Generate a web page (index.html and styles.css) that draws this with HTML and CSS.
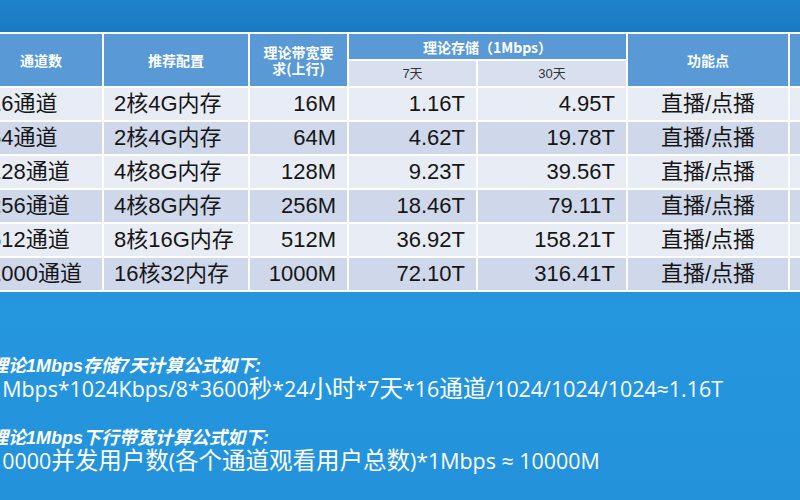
FILE: index.html
```html
<!DOCTYPE html>
<html lang="zh-CN">
<head>
<meta charset="utf-8">
<title>通道配置</title>
<link rel="stylesheet" href="styles.css">
</head>
<body>
<div class="slide">
  <table class="spec">
    <colgroup>
      <col class="c1"><col class="c2"><col class="c3"><col class="c4"><col class="c5"><col class="c6"><col class="c7">
    </colgroup>
    <thead>
      <tr>
        <th rowspan="2">通道数</th>
        <th rowspan="2">推荐配置</th>
        <th rowspan="2">理论带宽要<br>求(上行)</th>
        <th colspan="2" class="group">理论存储（1Mbps）</th>
        <th rowspan="2">功能点</th>
        <th rowspan="2"></th>
      </tr>
      <tr>
        <th class="sub">7天</th>
        <th class="sub">30天</th>
      </tr>
    </thead>
    <tbody>
      <tr class="odd"><td>16通道</td><td>2核4G内存</td><td class="num">16M</td><td class="num">1.16T</td><td class="num">4.95T</td><td class="mid">直播/点播</td><td></td></tr>
      <tr class="even"><td>64通道</td><td>2核4G内存</td><td class="num">64M</td><td class="num">4.62T</td><td class="num">19.78T</td><td class="mid">直播/点播</td><td></td></tr>
      <tr class="odd"><td>128通道</td><td>4核8G内存</td><td class="num">128M</td><td class="num">9.23T</td><td class="num">39.56T</td><td class="mid">直播/点播</td><td></td></tr>
      <tr class="even"><td>256通道</td><td>4核8G内存</td><td class="num">256M</td><td class="num">18.46T</td><td class="num">79.11T</td><td class="mid">直播/点播</td><td></td></tr>
      <tr class="odd"><td>512通道</td><td>8核16G内存</td><td class="num">512M</td><td class="num">36.92T</td><td class="num">158.21T</td><td class="mid">直播/点播</td><td></td></tr>
      <tr class="even"><td>1000通道</td><td>16核32内存</td><td class="num">1000M</td><td class="num">72.10T</td><td class="num">316.41T</td><td class="mid">直播/点播</td><td></td></tr>
    </tbody>
  </table>
  <div class="notes">
    <p class="title">理论1Mbps存储7天计算公式如下:</p>
    <p class="formula">1Mbps*1024Kbps/8*3600<span class="zh">秒</span>*24<span class="zh">小时</span>*7<span class="zh">天</span>*16<span class="zh">通道</span>/1024/1024/1024≈1.16T</p>
    <p class="title second">理论1Mbps下行带宽计算公式如下:</p>
    <p class="formula">10000<span class="zh">并发用户数</span>(<span class="zh">各个通道观看用户总数</span>)*1Mbps ≈ 10000M</p>
  </div>
</div>
</body>
</html>
```
FILE: styles.css
```css
* { box-sizing: border-box; }
html, body { margin: 0; padding: 0; }
body { width: 800px; height: 500px; overflow: hidden; }
.slide {
  width: 800px;
  height: 500px;
  overflow: hidden;
  padding-top: 32px;
  background: linear-gradient(180deg, #1e84cb 0px, #1a7bc3 30px, #1e88d0 120px, #2597de 310px, #2392da 500px);
}
.spec {
  margin-left: -22px;
  table-layout: fixed;
  width: 924px;
  border-collapse: separate;
  border-spacing: 2px;
  background: #ffffff;
  font-family: "Liberation Sans", "Noto Sans CJK SC", sans-serif;
}
.c1 { width: 122px; }
.c2 { width: 144px; }
.c3 { width: 97px; }
.c4 { width: 127px; }
.c5 { width: 148px; }
.c6 { width: 160px; }
.c7 { width: 110px; }
.spec th {
  background: #5899d6;
  color: #ffffff;
  font-family: "Noto Sans CJK SC", sans-serif;
  font-weight: 700;
  font-size: 14px;
  line-height: 16px;
  text-align: center;
  vertical-align: middle;
  padding: 0;
  height: 25px;
}
.spec th.sub {
  background: #d8e0f0;
  color: #333333;
  font-family: "Liberation Sans", "Noto Sans CJK SC", sans-serif;
  font-weight: 400;
  font-size: 13px;
}
.spec td {
  height: 32px;
  padding: 0 11px 0 9px;
  font-size: 22px;
  line-height: 24px;
  color: #161616;
  vertical-align: middle;
  white-space: nowrap;
}
.spec td:nth-child(2) { padding-left: 10px; }
.spec td.num { text-align: right; padding-right: 11px; }
.spec td.mid { text-align: center; padding: 0; }
.odd td { background: #e8ecf4; }
.even td { background: #cfd7ea; }
.notes {
  margin: 64px 0 0 -10px;
  color: #ffffff;
}
.notes p { margin: 0; white-space: nowrap; }
.title {
  font-family: "Liberation Sans", "Noto Sans CJK SC", sans-serif;
  font-weight: 700;
  font-style: italic;
  font-size: 18px;
  line-height: 20px;
}
.title.second { margin-top: 27px; }
.formula {
  font-family: "Open Sans", "Noto Sans CJK SC", sans-serif;
  font-size: 21.4px;
  line-height: 24px;
}
.formula .zh { font-size: 23.5px; }
```
